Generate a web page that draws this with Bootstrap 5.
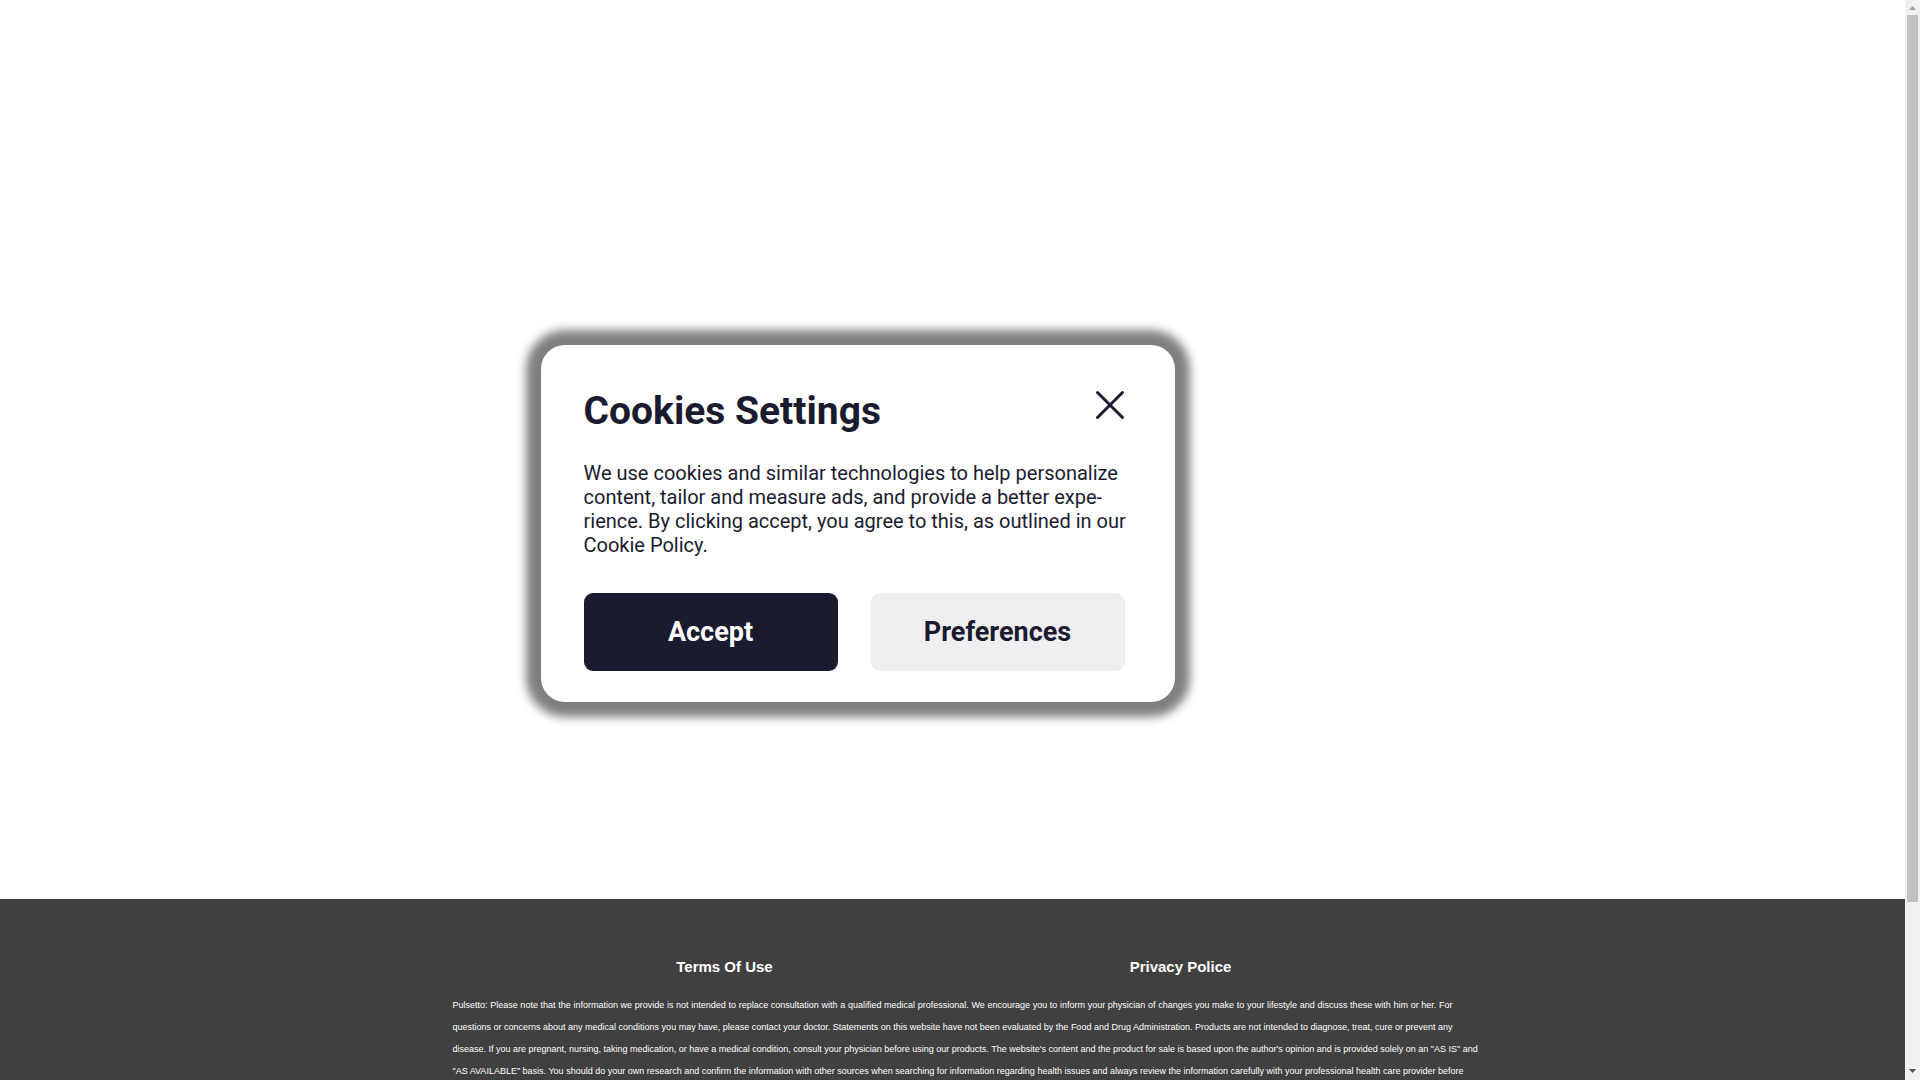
<!DOCTYPE html>
<html lang="en">
<head>
<meta charset="utf-8">
<meta name="viewport" content="width=device-width, initial-scale=1">
<title>Pulsetto</title>
<link href="https://cdn.jsdelivr.net/npm/bootstrap@5.3.0/dist/css/bootstrap.min.css" rel="stylesheet">
<style>
  body { font-family: "Liberation Sans", Arial, sans-serif; background: #fff; }
  .page-main { min-width: 0; }
  .hero { height: 899px; }
  .wrap { max-width: 1000px; }
  .cookie-box {
    width: 634px; max-width: 100%; margin-top: 345px; margin-left: 88px;
    padding: 42px 43px 31px; border-radius: 24px; background: #fff;
    box-shadow: 0 0 10px 15px rgba(0, 0, 0, .5);
    font-family: Roboto, sans-serif; color: #1b1b2f;
  }
  .cookie-title { font-size: 39px; line-height: 48px; font-weight: 700; }
  .cookie-close { width: 30px; height: 30px; margin: 3px 7px 0 0; color: #1b1b2f; }
  .cookie-text { font-size: 20px; line-height: 24px; margin: 26px 0 36px; color: #1b1b2f; }
  .cookie-actions { gap: 33px; }
  .cookie-btn { width: 254px; height: 78px; border: 0; border-radius: 9px; font-size: 27px; line-height: 32px; font-weight: 700; }
  .btn-accept, .btn-accept:hover { background: #1b1b2f; color: #fff; }
  .btn-prefs, .btn-prefs:hover { background: #efeff1; color: #1b1b2f; }
  .site-footer { background: #404040; color: #fff; padding-top: 56px; }
  .footer-links { padding: 0 44px; margin-bottom: 15px; }
  .footer-links a { font-size: 15px; line-height: 22px; font-weight: 700; color: #fff; }
  .disclaimer { font-size: 9px; line-height: 22px; text-align: justify; text-align-last: justify; white-space: nowrap; }
  .scroll-rail { width: 15px; background: #f1f1f1; padding: 5px 2px; }
  .scroll-thumb { height: 887px; margin-top: 4px; background: #c1c1c1; }
</style>
<script src="https://cdn.jsdelivr.net/npm/bootstrap@5.3.0/dist/js/bootstrap.bundle.min.js"></script>
</head>
<body class="d-flex vh-100 overflow-hidden">
  <div class="page-main flex-grow-1 d-flex flex-column">
    <main class="hero flex-shrink-0 overflow-hidden">
      <div class="wrap mx-auto d-flex">
        <section class="cookie-box" aria-labelledby="cookie-title">
          <div class="d-flex justify-content-between">
            <h1 class="cookie-title m-0" id="cookie-title">Cookies Settings</h1>
            <button type="button" class="cookie-close btn p-0 border-0 d-flex" aria-label="Close">
              <svg width="30" height="30" viewBox="0 0 30 30" fill="none" stroke="currentColor" stroke-width="3" stroke-linecap="round"><path d="M2.500 2.500 27.500 27.500M27.500 2.500 2.500 27.500"/></svg>
            </button>
          </div>
          <p class="cookie-text text-nowrap">We use cookies and similar technologies to help personalize<br>content, tailor and measure ads, and provide a better expe-<br>rience. By clicking accept, you agree to this, as outlined in our<br>Cookie Policy.</p>
          <div class="cookie-actions d-flex">
            <button type="button" class="cookie-btn btn btn-accept flex-shrink-0">Accept</button>
            <button type="button" class="cookie-btn btn btn-prefs flex-shrink-0">Preferences</button>
          </div>
        </section>
      </div>
    </main>
    <footer class="site-footer flex-grow-1">
      <div class="wrap mx-auto">
        <nav class="footer-links d-flex text-center" aria-label="Legal">
          <div class="w-50"><a class="text-decoration-none" href="#terms">Terms Of Use</a></div>
          <div class="w-50"><a class="text-decoration-none" href="#privacy">Privacy Police</a></div>
        </nav>
        <p class="disclaimer m-0">Pulsetto: Please note that the information we provide is not intended to replace consultation with a qualified medical professional. We encourage you to inform your physician of changes you make to your lifestyle and discuss these with him or her. For<br>questions or concerns about any medical conditions you may have, please contact your doctor. Statements on this website have not been evaluated by the Food and Drug Administration. Products are not intended to diagnose, treat, cure or prevent any<br>disease. If you are pregnant, nursing, taking medication, or have a medical condition, consult your physician before using our products. The website's content and the product for sale is based upon the author's opinion and is provided solely on an "AS IS" and<br>"AS AVAILABLE" basis. You should do your own research and confirm the information with other sources when searching for information regarding health issues and always review the information carefully with your professional health care provider before</p>
      </div>
    </footer>
  </div>
  <div class="scroll-rail flex-shrink-0 d-flex flex-column align-items-center" aria-hidden="true">
    <svg class="flex-shrink-0" width="7" height="6" viewBox="0 0 7 6"><path d="M0 5 3.500 1 7 5z" fill="#a3a3a3"/></svg>
    <div class="scroll-thumb w-100 flex-shrink-0"></div>
    <svg class="flex-shrink-0 mt-auto" width="7" height="6" viewBox="0 0 7 6"><path d="M0 0 3.500 4 7 0z" fill="#505050"/></svg>
  </div>
</body>
</html>
